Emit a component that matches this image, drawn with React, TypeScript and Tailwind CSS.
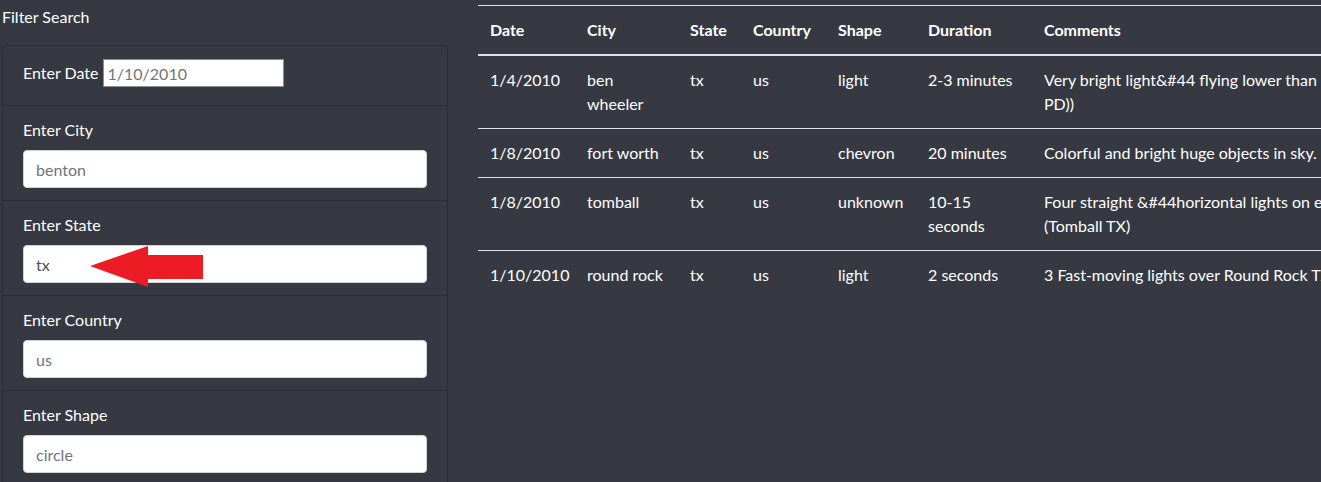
import React from "react";

const font = { fontFamily: "Lato, 'Noto Sans', sans-serif" };

function Field({ label, placeholder, value }: { label: string; placeholder?: string; value?: string }) {
  return (
    <div className="border-t border-[#2a2d33] px-5 pt-3 pb-3">
      <div className="text-base leading-6 text-white mb-2">{label}</div>
      <input
        readOnly
        defaultValue={value}
        placeholder={placeholder}
        className="block w-full h-[38px] rounded bg-white border border-[#ced4da] px-3 text-base text-[#495057] placeholder:text-[#6c757d] outline-none"
        style={font}
      />
    </div>
  );
}

const rows = [
  {
    date: "1/4/2010",
    city: ["ben", "wheeler"],
    state: "tx",
    country: "us",
    shape: "light",
    duration: ["2-3 minutes"],
    comments: ["Very bright light&#44 flying lower than a plane&#44 very fast (NUFORC Note: Hoax?", "PD))"],
  },
  {
    date: "1/8/2010",
    city: ["fort worth"],
    state: "tx",
    country: "us",
    shape: "chevron",
    duration: ["20 minutes"],
    comments: ["Colorful and bright huge objects in sky."],
  },
  {
    date: "1/8/2010",
    city: ["tomball"],
    state: "tx",
    country: "us",
    shape: "unknown",
    duration: ["10-15", "seconds"],
    comments: ["Four straight &#44horizontal lights on edge of cloud moving slowly", "(Tomball TX)"],
  },
  {
    date: "1/10/2010",
    city: ["round rock"],
    state: "tx",
    country: "us",
    shape: "light",
    duration: ["2 seconds"],
    comments: ["3 Fast-moving lights over Round Rock TX"],
  },
];

function Lines({ lines }: { lines: string[] }) {
  return (
    <>
      {lines.map((l, i) => (
        <div key={i} className="whitespace-nowrap">
          {l}
        </div>
      ))}
    </>
  );
}

export default function App() {
  return (
    <div className="w-[1321px] h-[482px] overflow-hidden bg-[#363942] text-white relative" style={font}>
      <div className="flex">
        <div className="w-[448px] shrink-0 pl-[2px] pt-[5px]">
          <div className="text-base leading-6 text-white mb-4">Filter Search</div>
          <div className="rounded border border-[#2a2d33]">
            <div className="h-[59px] px-5 pt-[13px]">
              <div className="h-[28px] flex items-center text-base leading-6">
                <span className="mr-1">Enter Date</span>
                <input
                  readOnly
                  placeholder="1/10/2010"
                  className="w-[181px] h-[28px] bg-white border border-[#8f8f8f] px-1 text-base text-[#495057] placeholder:text-[#757575] outline-none"
                  style={font}
                />
              </div>
            </div>
            <Field label="Enter City" placeholder="benton" />
            <Field label="Enter State" value="tx" />
            <Field label="Enter Country" placeholder="us" />
            <Field label="Enter Shape" placeholder="circle" />
          </div>
        </div>
        <div className="ml-[30px] pt-[5px] flex-1 overflow-hidden">
          <table className="border-collapse text-base leading-6 text-white table-fixed w-[1200px]">
            <colgroup>
              <col className="w-[97px]" />
              <col className="w-[103px]" />
              <col className="w-[63px]" />
              <col className="w-[85px]" />
              <col className="w-[90px]" />
              <col className="w-[116px]" />
              <col className="w-[646px]" />
            </colgroup>
            <thead>
              <tr className="border-t border-[#dee2e6] border-b-2 border-b-[#dee2e6]">
                {["Date", "City", "State", "Country", "Shape", "Duration", "Comments"].map((h) => (
                  <th key={h} className="p-3 text-left font-bold align-bottom">
                    {h}
                  </th>
                ))}
              </tr>
            </thead>
            <tbody>
              {rows.map((r, i) => (
                <tr key={i} className={i > 0 ? "border-t border-[#dee2e6]" : ""}>
                  <td className="p-3 align-top whitespace-nowrap">{r.date}</td>
                  <td className="p-3 align-top">
                    <Lines lines={r.city} />
                  </td>
                  <td className="p-3 align-top">{r.state}</td>
                  <td className="p-3 align-top">{r.country}</td>
                  <td className="p-3 align-top">{r.shape}</td>
                  <td className="p-3 align-top">
                    <Lines lines={r.duration} />
                  </td>
                  <td className="p-3 align-top">
                    <Lines lines={r.comments} />
                  </td>
                </tr>
              ))}
            </tbody>
          </table>
        </div>
      </div>
      <svg className="absolute left-0 top-0 pointer-events-none" width="220" height="300" viewBox="0 0 220 300">
        <polygon points="90,266 148,246 148,255 203,255 203,279 148,279 148,287" fill="#ed1c24" />
      </svg>
    </div>
  );
}
